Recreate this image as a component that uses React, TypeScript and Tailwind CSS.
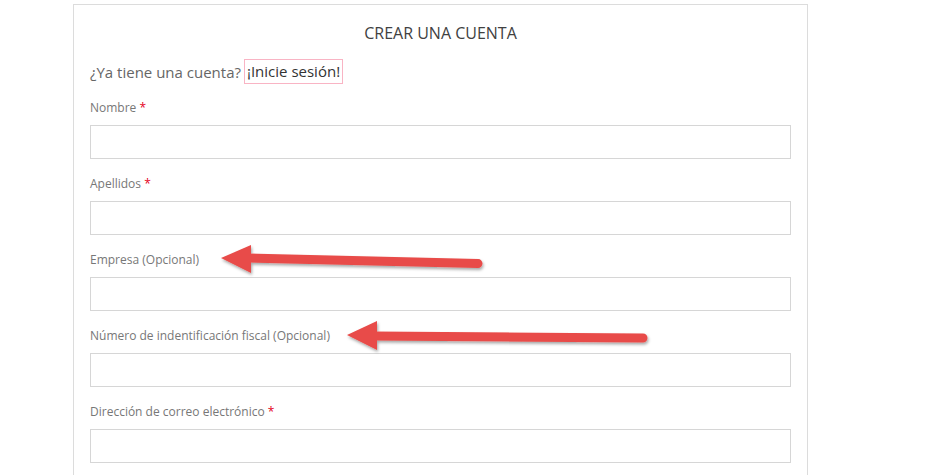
import React from "react";

const fields = [
  { label: "Nombre", req: true },
  { label: "Apellidos", req: true },
  { label: "Empresa (Opcional)", req: false },
  { label: "Número de indentificación fiscal (Opcional)", req: false },
  { label: "Dirección de correo electrónico", req: true },
];

export default function App() {
  return (
    <div className="relative w-[932px] h-[475px] overflow-hidden bg-white" style={{ fontFamily: '"Open Sans", "Noto Sans", sans-serif' }}>
      <div className="ml-[73px] mt-[4px] w-[735px] h-[600px] border border-[#dcdcdc] px-4 pt-[17px]">
        <h1 className="h-[22px] leading-[22px] text-center text-[16px] text-[#414141] font-normal">CREAR UNA CUENTA</h1>
        <div className="mt-[15px] h-[25px] flex items-center text-[15px] text-[#666]">
          <span className="leading-[24px]">¿Ya tiene una cuenta?</span>
          <span className="ml-[3px] inline-block border border-[#f9b4c4] px-[2px] leading-[23px] text-[#333]">¡Inicie sesión!</span>
        </div>
        <div className="mt-[14px] flex flex-col gap-[15px]">
          {fields.map((f) => (
            <div key={f.label} className="flex flex-col">
              <label className="h-[18px] leading-[20px] text-[12px] text-[#777] mb-[9px]">
                {f.label}
                {f.req && <span className="text-[#e4001b]"> *</span>}
              </label>
              <input className="h-[34px] w-full border border-[#d6d6d6] bg-white outline-none" />
            </div>
          ))}
        </div>
      </div>
      <svg className="absolute left-0 top-0 pointer-events-none" width="932" height="475" viewBox="0 0 932 475">
        <defs>
          <filter id="sh" x="-10%" y="-50%" width="120%" height="200%">
            <feDropShadow dx="1" dy="2" stdDeviation="1.5" floodColor="#000" floodOpacity="0.35" />
          </filter>
        </defs>
        <g filter="url(#sh)" fill="#e84b48" stroke="#e84b48">
          <line x1="246" y1="258" x2="478" y2="263.5" strokeWidth="9" strokeLinecap="round" />
          <polygon points="221,258 251,245 251,273" stroke="none" />
        </g>
        <g filter="url(#sh)" fill="#e84b48" stroke="#e84b48">
          <line x1="372" y1="336" x2="643" y2="338" strokeWidth="9" strokeLinecap="round" />
          <polygon points="347,335 377,321 377,350" stroke="none" />
        </g>
      </svg>
    </div>
  );
}
